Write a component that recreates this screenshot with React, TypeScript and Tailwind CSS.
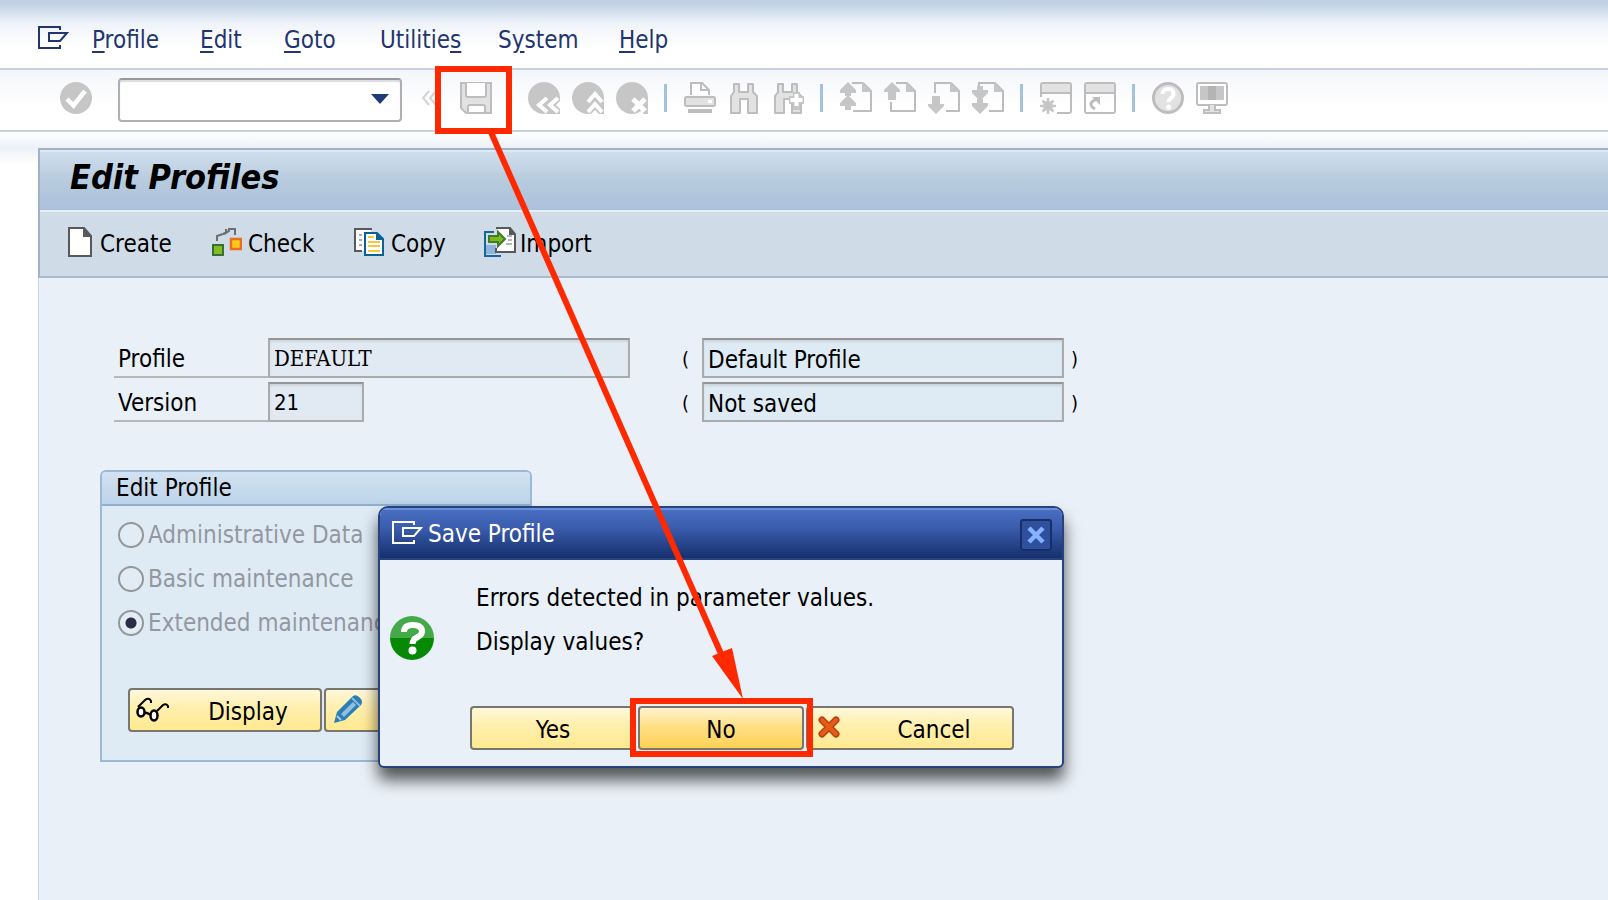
import React from "react";

type IconProps = { children: React.ReactNode; className?: string };

function Icon({ children, className = "h-8 w-8" }: IconProps) {
  return (
    <svg viewBox="0 0 32 32" fill="none" aria-hidden="true" className={`shrink-0 ${className}`}>
      {children}
    </svg>
  );
}

const GREY = "#bdbdbd";
const FILL = "#c6c6c6";
const PALE = "#e2e2e2";

function PageOutline({ d }: { d: string }) {
  return (
    <>
      <path d={d} stroke={GREY} strokeWidth="2" />
      <path d="M22 0L32 10H22Z" fill={FILL} />
    </>
  );
}

function SessionIcon() {
  return (
    <svg viewBox="0 0 32 24" fill="none" aria-hidden="true" className="h-6 w-8 shrink-0">
      <path d="M22 4V1H1V22H22V19" stroke="currentColor" strokeWidth="2" />
      <path d="M11 7H29L22 15H11Z" stroke="currentColor" strokeWidth="2" />
    </svg>
  );
}

const disc = <circle cx="16" cy="16" r="16" fill={FILL} />;

const icons = {
  enter: (
    <Icon>
      {disc}
      <path d="M7 17L13.500 23.500L25 9" stroke="#fff" strokeWidth="4.500" />
    </Icon>
  ),
  save: (
    <Icon>
      <path d="M1 1H31V31H6L1 26Z" fill={PALE} stroke={GREY} strokeWidth="2" />
      <path d="M6 1V13Q6 15 8 15H24Q26 15 26 13V1" fill="#fff" stroke={GREY} strokeWidth="2" />
      <path d="M8 31V25Q8 23 10 23H23Q25 23 25 25V31Z" fill="#fff" stroke={GREY} strokeWidth="2" />
    </Icon>
  ),
  back: (
    <Icon>
      {disc}
      <path d="M20 32L16 24L22 16H32V32Z" fill={FILL} />
      <path d="M19 16L11 23L19 30M30 16L22 23L30 30" stroke="#fff" strokeWidth="4" />
      <path d="M28 23L32 19V27Z" fill="#fff" />
    </Icon>
  ),
  exit: (
    <Icon>
      {disc}
      <path d="M16 32V20L24 14L32 20V32Z" fill={FILL} />
      <path d="M16 20L23 12L30 20M16 30L23 22L30 30" stroke="#fff" strokeWidth="4" />
      <path d="M23 28L19 32H27Z" fill="#fff" />
    </Icon>
  ),
  cancel: (
    <Icon>
      {disc}
      <path d="M27 18H32V32H27Z" fill={FILL} />
      <path d="M17 17L29 29M29 17L17 29" stroke="#fff" strokeWidth="5" />
    </Icon>
  ),
  print: (
    <Icon>
      <path d="M7 13V1H18L25 8V13" fill="#fff" stroke={GREY} strokeWidth="2" />
      <path d="M17 1V8H25" stroke={GREY} strokeWidth="2" />
      <rect x="1" y="15" width="30" height="9" rx="1.500" fill={PALE} stroke={GREY} strokeWidth="2" />
      <path d="M24 19.500H28" stroke="#fff" strokeWidth="3" />
      <path d="M4 29H28" stroke={GREY} strokeWidth="4" />
    </Icon>
  ),
  find: (
    <Icon>
      <path
        d="M3 31V14L6 10V2H11V10H20V2H25V10L29 14V31H20V17H12V31Z"
        fill={PALE}
        stroke={GREY}
        strokeWidth="2"
        strokeLinejoin="round"
      />
    </Icon>
  ),
  findNext: (
    <Icon>
      <path
        d="M3 31V14L6 10V2H11V10H20V2H25V10L29 14V31H20V17H12V31Z"
        fill={PALE}
        stroke={GREY}
        strokeWidth="2"
        strokeLinejoin="round"
      />
      <path d="M21 10H28V14H32V22H28V28H21V22H17V14H21Z" fill={FILL} />
      <path d="M24.500 12V24M18.500 18H30.500" stroke="#fff" strokeWidth="4" />
    </Icon>
  ),
  firstPage: (
    <Icon>
      <PageOutline d="M12 1H23L31 9V29H13" />
      <path d="M8 0L16 8V11H11V14H8H5V11H0V8Z" fill={FILL} />
      <path d="M8 13L16 21V24H11V28H5V24H0V21Z" fill={FILL} />
    </Icon>
  ),
  prevPage: (
    <Icon>
      <PageOutline d="M12 1H23L31 9V29H7V20" />
      <path d="M8 0L16 8V10H12V18H4V10H0V8Z" fill={FILL} />
    </Icon>
  ),
  nextPage: (
    <Icon>
      <PageOutline d="M7 11V1H23L31 9V29H18" />
      <path d="M4 14H12V22H16V24L8 32L0 24V22H4Z" fill={FILL} />
    </Icon>
  ),
  lastPage: (
    <Icon>
      <PageOutline d="M7 4V1H23L31 9V29H17" />
      <path d="M5 4H11V8H16V11L8 19L0 11V8H5Z" fill={FILL} />
      <path d="M5 17H11V21H16V24L8 32L0 24V21H5Z" fill={FILL} />
    </Icon>
  ),
  newSession: (
    <Icon>
      <path d="M1 15V3Q1 1 3 1H29Q31 1 31 3V29Q31 31 29 31H17" stroke={GREY} strokeWidth="2" />
      <path d="M2 2H30V10H2Z" fill={PALE} />
      <path d="M1 11H31" stroke={GREY} strokeWidth="2" />
      <path d="M8 16V32M0 24H16M2.500 18.500L13.500 29.500M13.500 18.500L2.500 29.500" stroke={FILL} strokeWidth="2.500" />
      <circle cx="8" cy="24" r="5" fill={FILL} />
    </Icon>
  ),
  shortcut: (
    <Icon>
      <rect x="1" y="1" width="30" height="30" rx="2" stroke={GREY} strokeWidth="2" />
      <path d="M2 2H30V10H2Z" fill={PALE} />
      <path d="M1 11H31" stroke={GREY} strokeWidth="2" />
      <path d="M11 27Q4 23 9 19L13 17" stroke={GREY} strokeWidth="3" />
      <path d="M8 15H16V23Z" fill={GREY} />
    </Icon>
  ),
  help: (
    <Icon>
      <circle cx="16" cy="16" r="14.500" fill={PALE} stroke={GREY} strokeWidth="3" />
      <path d="M10.500 12Q11 7 16 7Q21.500 7 21.500 12Q21.500 14.500 18.500 16.500Q16.500 18 16.500 20" stroke="#fff" strokeWidth="4" />
      <circle cx="16.500" cy="25" r="2.500" fill="#fff" />
    </Icon>
  ),
  layout: (
    <Icon>
      <rect x="1" y="1" width="30" height="22" rx="2" fill="#fff" stroke={GREY} strokeWidth="2" />
      <path d="M4 4H28V18H4Z" fill={FILL} />
      <path d="M12 4H20V18H12Z" fill="#b4b4b4" />
      <path d="M13 23V28H8V31H24V28H19V23" fill={PALE} stroke={GREY} strokeWidth="2" />
    </Icon>
  ),
};

type Tool = { icon: keyof typeof icons; label: string } | "separator";

const TOOLS: Tool[] = [
  { icon: "back", label: "Back" },
  { icon: "exit", label: "Exit" },
  { icon: "cancel", label: "Cancel" },
  "separator",
  { icon: "print", label: "Print" },
  { icon: "find", label: "Find" },
  { icon: "findNext", label: "Find next" },
  "separator",
  { icon: "firstPage", label: "First page" },
  { icon: "prevPage", label: "Previous page" },
  { icon: "nextPage", label: "Next page" },
  { icon: "lastPage", label: "Last page" },
  "separator",
  { icon: "newSession", label: "New session" },
  { icon: "shortcut", label: "Create shortcut" },
  "separator",
  { icon: "help", label: "Help" },
  { icon: "layout", label: "Customize local layout" },
];

const MENU: [string, string, string][] = [
  ["", "P", "rofile"],
  ["", "E", "dit"],
  ["", "G", "oto"],
  ["Utilitie", "s", ""],
  ["S", "y", "stem"],
  ["", "H", "elp"],
];

function MenuBar() {
  return (
    <header className="flex h-[70px] items-center border-b-2 border-[#c6cfdb] bg-linear-to-b from-[#c0d1e5] from-5% via-[#f0f4f9] via-35% to-white to-70% pt-2 pl-[38px] text-[#22356f]">
      <SessionIcon />
      <nav aria-label="Main" className="ml-[22px] grid grid-cols-[108px_84px_96px_118px_121px_auto] pt-1">
        {MENU.map(([before, key, after]) => (
          <a key={before + key + after} href="#" className="whitespace-nowrap">
            {before}
            <u className="decoration-2 underline-offset-3">{key}</u>
            {after}
          </a>
        ))}
      </nav>
    </header>
  );
}

function ToolBar() {
  return (
    <div className="flex h-[62px] items-center border-b-2 border-[#c9d1dc] bg-linear-to-b from-[#f3f6fa] to-white to-60% pl-[60px]">
      <button type="button" aria-label="Enter" className="pb-1">
        {icons.enter}
      </button>
      <div className="relative ml-[26px]">
        <select
          aria-label="Command"
          className="block h-11 w-[284px] appearance-none rounded-[4px] border-2 border-[#adafb3] border-t-[#96989b] bg-white shadow-[inset_0_2px_1px_#dcdde0]"
        />
        <svg viewBox="0 0 18 10" aria-hidden="true" className="pointer-events-none absolute top-4 right-[13px] h-[10px] w-[18px]">
          <path d="M0 0H18L9 10Z" fill="#1f3a78" />
        </svg>
      </div>
      <svg viewBox="0 0 14 16" fill="none" aria-hidden="true" className="mb-1 ml-5 h-4 w-[14px]">
        <path d="M7 1L1 8L7 15M14 1L8 8L14 15" stroke="#d3d3d3" strokeWidth="2" />
      </svg>
      <div className="relative ml-6 pb-1">
        <button type="button" aria-label="Save" className="block">
          {icons.save}
        </button>
        <span className="pointer-events-none absolute -top-4 -left-[25px] h-[68px] w-[77px] border-6 border-[#ff2900]" />
      </div>
      <div className="ml-9 flex items-center gap-3 pb-1">
        {TOOLS.map((tool, i) =>
          tool === "separator" ? (
            <span key={i} className="mx-1 h-7 w-1 border-l-3 border-[#a3c2e0]" />
          ) : (
            <button key={i} type="button" aria-label={tool.label}>
              {icons[tool.icon]}
            </button>
          ),
        )}
      </div>
    </div>
  );
}

function CreateIcon() {
  return (
    <svg viewBox="0 0 24 30" fill="none" aria-hidden="true" className="h-[30px] w-6">
      <path d="M1 1H16L23 9V29H1Z" fill="#fff" stroke="#58595b" strokeWidth="2" />
      <path d="M15 0L24 10H15Z" fill="#58595b" />
    </svg>
  );
}

function CheckIcon() {
  return (
    <svg viewBox="0 0 30 28" fill="none" aria-hidden="true" className="h-7 w-[30px]">
      <path d="M5 13V8L14 5V1V5L17 3V1H23V7M17 3L11 6" stroke="#6d6e70" strokeWidth="2" />
      <path d="M1 17H11V27H1Z" fill="#84bd1e" stroke="#33703a" strokeWidth="2" />
      <path d="M19 11H29V21H19Z" fill="#ffc91a" stroke="#ee6b23" strokeWidth="2.500" />
    </svg>
  );
}

function CopyIcon() {
  return (
    <svg viewBox="0 0 31 28" fill="none" aria-hidden="true" className="h-7 w-[31px]">
      <path d="M1 1H17V4H10V23H1Z" fill="#fff" />
      <path d="M18 1H1V23H8" stroke="#58595b" strokeWidth="2" />
      <path d="M5 7H8M5 12H8M5 17H8" stroke="#a9a9ab" strokeWidth="2" />
      <path d="M11 5H23L29 11V27H11Z" fill="#fff" stroke="#0b6193" strokeWidth="2" />
      <path d="M22 4L30 12H22Z" fill="#0b6193" />
      <path d="M14 9H20M14 14H26M14 18H26M14 23H26" stroke="#f8c63c" strokeWidth="2" />
    </svg>
  );
}

function ImportIcon() {
  return (
    <svg viewBox="0 0 32 30" fill="none" aria-hidden="true" className="h-[30px] w-8">
      <path d="M13 1H26L31 6V25H13Z" fill="#fff" />
      <path d="M2 18H12V27H2Z" fill="#8fb4dc" />
      <path d="M10 5H1V29H17" stroke="#15679a" strokeWidth="2" />
      <path d="M12 1H26L31 7V25H12V21" stroke="#58595b" strokeWidth="2" />
      <path d="M25 0L32 8H25Z" fill="#58595b" />
      <path d="M23 9H28M24 13H28M22 17H28" stroke="#b5b6b8" strokeWidth="2" />
      <path d="M5 9H14V5L21 12L14 19V15H5Z" fill="#7fb81d" stroke="#3d7d2c" strokeWidth="2" />
    </svg>
  );
}

function ActionBar() {
  const actions = [
    { label: "Create", icon: <CreateIcon />, width: "w-[144px] gap-2" },
    { label: "Check", icon: <CheckIcon />, width: "w-[142px] gap-1.5" },
    { label: "Copy", icon: <CopyIcon />, width: "w-[130px] gap-1.5" },
    { label: "Import", icon: <ImportIcon />, width: "w-[130px] gap-1" },
  ];
  return (
    <div className="flex h-[66px] items-center border-b-2 border-[#a9bbcd] bg-[#cfdce8] pl-7">
      {actions.map((a) => (
        <button key={a.label} type="button" className={`flex items-center whitespace-nowrap ${a.width}`}>
          <span className="pb-1">{a.icon}</span>
          {a.label}
        </button>
      ))}
    </div>
  );
}

const FIELD =
  "h-10 border-2 border-[#a9abad] border-t-[#939597] px-1 shadow-[inset_0_2px_2px_#cfd6dc] outline-none";

function FieldRow(props: { id: string; label: string; value: string; valueClass: string; text: string }) {
  return (
    <div className="flex h-10 items-center">
      <label htmlFor={props.id} className="flex h-10 w-[154px] items-center border-b-2 border-[#b5b7b9] pt-1 pl-1">
        {props.label}
      </label>
      <div className="w-[362px]">
        <input id={props.id} readOnly value={props.value} className={`${FIELD} bg-[#e1e9f2] ${props.valueClass}`} />
      </div>
      <span className="ml-[52px] w-5 pt-0.5 text-[20px]">(</span>
      <input
        aria-label={`${props.label} description`}
        readOnly
        value={props.text}
        className={`${FIELD} w-[362px] bg-[#deebf5] pt-1`}
      />
      <span className="ml-[7px] pt-0.5 text-[20px]">)</span>
    </div>
  );
}

const YELLOW =
  "relative flex h-11 items-center justify-center rounded-[4px] border-2 border-[#77766f] bg-linear-to-b from-[#fff8dc] via-[#fff0b0] via-40% to-[#ffe990] pt-1";

function GlassesIcon() {
  return (
    <svg viewBox="0 0 34 26" fill="none" aria-hidden="true" className="h-[26px] w-[34px]">
      <g stroke="#000" strokeWidth="2">
        <path d="M3 10L10 3Q14 0 16 4V6M22 14L28 8Q31 6 33 9V11" />
        <ellipse cx="6" cy="15" rx="3.500" ry="4.500" fill="#fff" strokeWidth="2.500" />
        <ellipse cx="19" cy="18.500" rx="3.500" ry="5" fill="#fff" strokeWidth="2.500" />
        <path d="M9 16H12L16 18" strokeWidth="2.500" />
      </g>
    </svg>
  );
}

function PencilIcon() {
  return (
    <svg viewBox="0 0 30 30" fill="none" aria-hidden="true" className="h-[30px] w-[30px]">
      <path d="M1 29L4 18L20 2Q23 0 26 3L28 5Q30 8 28 11L12 26Z" fill="#2a7fb5" />
      <path d="M8 20L20 8L23 11L11 23Z" fill="#93bde2" />
      <path d="M19 4L27 12" stroke="#8db9dd" strokeWidth="2" />
      <path d="M4 22L8 26" stroke="#a9cbe6" strokeWidth="2" />
    </svg>
  );
}

function EditProfileGroup() {
  const options = ["Administrative Data", "Basic maintenance", "Extended maintenance"];
  return (
    <section
      aria-labelledby="group-title"
      className="h-[292px] w-[432px] rounded-t-[6px] border-2 border-[#9db9d6] bg-[#deebf5]"
    >
      <h2
        id="group-title"
        className="flex h-[34px] items-center rounded-t-[4px] border-b-2 border-[#8fafcd] bg-linear-to-b from-[#d2e2f0] to-[#bdd4ea] pl-[14px]"
      >
        Edit Profile
      </h2>
      <div className="flex flex-col pt-[7px] pl-4">
        {options.map((o, i) => (
          <label key={o} className="flex h-11 items-center gap-1 whitespace-nowrap text-[#94979f]">
            <input
              type="radio"
              name="mode"
              disabled
              defaultChecked={i === 2}
              className="h-[26px] w-[26px] appearance-none rounded-full border-2 border-[#949698] bg-[#e2ecf4] checked:bg-[radial-gradient(circle,#2c2c44_5px,#e2ecf4_6px)]"
            />
            {o}
          </label>
        ))}
      </div>
      <div className="mt-[43px] ml-[26px] flex gap-0.5">
        <button type="button" className={`${YELLOW} w-[194px] pl-[46px]`}>
          <span className="absolute left-[5px] pb-1">
            <GlassesIcon />
          </span>
          Display
        </button>
        <button type="button" aria-label="Change" className={`${YELLOW} w-[194px]`}>
          <span className="absolute top-1 left-[7px]">
            <PencilIcon />
          </span>
        </button>
      </div>
    </section>
  );
}

function SaveDialog() {
  return (
    <div
      role="dialog"
      aria-labelledby="dialog-title"
      className="absolute top-[506px] left-[378px] flex w-[686px] flex-col overflow-hidden rounded-[10px] rounded-b-[6px] border-2 border-[#27427f] bg-[#e9f0f7] shadow-[0_12px_16px_rgba(0,0,0,0.65)]"
    >
      <div className="flex h-[52px] items-center border-b-2 border-[#27427f] bg-linear-to-b from-[#4a70c4] via-[#3a5cac] via-40% to-[#16306e] pr-[10px] pl-3 text-white shadow-[inset_0_2px_0_#6a90d8]">
        <SessionIcon />
        <h2 id="dialog-title" className="ml-1 flex-1 pt-0.5">
          Save Profile
        </h2>
        <button
          type="button"
          aria-label="Close"
          className="mt-1 flex h-8 w-8 items-center justify-center rounded-[3px] border-2 border-[#172f66] bg-[#2f509c]"
        >
          <svg viewBox="0 0 18 18" aria-hidden="true" className="h-[18px] w-[18px]">
            <path d="M2 2L16 16M16 2L2 16" stroke="#86b1ff" strokeWidth="4.500" />
          </svg>
        </button>
      </div>
      <div className="relative flex h-[206px] flex-col pt-4 pl-24">
        <p className="h-11 whitespace-nowrap leading-[44px]">Errors detected in parameter values.</p>
        <p className="h-11 leading-[44px]">Display values?</p>
        <svg viewBox="0 0 44 44" fill="none" aria-hidden="true" className="absolute top-14 left-[10px] h-11 w-11">
          <path d="M0 22A22 22 0 0 1 44 22Z" fill="#45a949" />
          <path d="M0 22A22 22 0 0 0 44 22Z" fill="#068a06" />
          <path
            d="M14 16Q14 9 22.500 9Q32 9 32 15.500Q32 19 27 21.500Q22.500 23.500 22.500 28"
            stroke="#fff"
            strokeWidth="6"
          />
          <circle cx="22.500" cy="34.500" r="4" fill="#fff" />
        </svg>
        <div className="-ml-[6px] mt-[42px] flex gap-0.5">
          <button type="button" className={`${YELLOW} w-[166px]`}>
            Yes
          </button>
          <div className="relative">
            <button
              type="button"
              className="flex h-11 w-[166px] items-center justify-center rounded-[4px] border-2 border-[#77766f] bg-linear-to-b from-[#fff3d0] via-[#ffdf85] via-45% to-[#ffd152] pt-1"
            >
              No
            </button>
            <span className="pointer-events-none absolute -top-2 -left-2 z-10 h-[59px] w-[183px] border-6 border-[#ff2900]" />
          </div>
          <button type="button" className={`${YELLOW} w-[208px] pl-[48px]`}>
            <svg viewBox="0 0 22 22" aria-hidden="true" className="absolute top-2 left-[10px] h-[22px] w-[22px]">
              <path d="M4 4L18 18M18 4L4 18" stroke="#b83c12" strokeWidth="7" strokeLinecap="round" />
              <path d="M4 4L18 18M18 4L4 18" stroke="#e65c16" strokeWidth="4" strokeLinecap="round" />
            </svg>
            Cancel
          </button>
        </div>
      </div>
    </div>
  );
}

export default function App() {
  return (
    <div className="relative flex min-h-screen flex-col overflow-hidden bg-white font-['DejaVu_Sans_Condensed','Noto_Sans',sans-serif] text-[24px] leading-8 text-black">
      <MenuBar />
      <ToolBar />
      <div className="flex flex-1 flex-col bg-linear-to-b from-white via-[#ecf1f8] via-[16px] to-white to-[32px] pt-4 pl-[38px]">
        <div className="border-t-2 border-l-2 border-[#9fb2c8]">
          <h1 className="flex h-[62px] items-center border-b-2 border-t-2 border-t-[#dfe9f3] border-b-[#e6eef6] bg-linear-to-b from-[#cfdeed] via-[#b7cbde] to-[#abc1dc] pb-2 pl-[30px] text-[34px] font-bold italic">
            Edit Profiles
          </h1>
          <ActionBar />
        </div>
        <main className="flex flex-1 flex-col border-l border-[#cbd6e4] bg-[#e9f0f7]">
          <div className="flex flex-col gap-1 pt-[60px] pl-[75px]">
            <FieldRow
              id="profile"
              label="Profile"
              value="DEFAULT"
              valueClass="w-full font-['DejaVu_Serif_Condensed','Liberation_Serif',serif] text-[22px]"
              text="Default Profile"
            />
            <FieldRow id="version" label="Version" value="21" valueClass="w-24 text-[22px]" text="Not saved" />
          </div>
          <div className="pt-12 pl-[61px]">
            <EditProfileGroup />
          </div>
        </main>
      </div>
      <SaveDialog />
      <svg viewBox="0 0 264 570" aria-hidden="true" className="pointer-events-none absolute top-[130px] left-[480px] h-[570px] w-[264px]">
        <path d="M10 0L242 526" stroke="#ff2900" strokeWidth="6" />
        <path d="M232 526L252 518L263 569Z" fill="#ff2900" />
      </svg>
    </div>
  );
}
